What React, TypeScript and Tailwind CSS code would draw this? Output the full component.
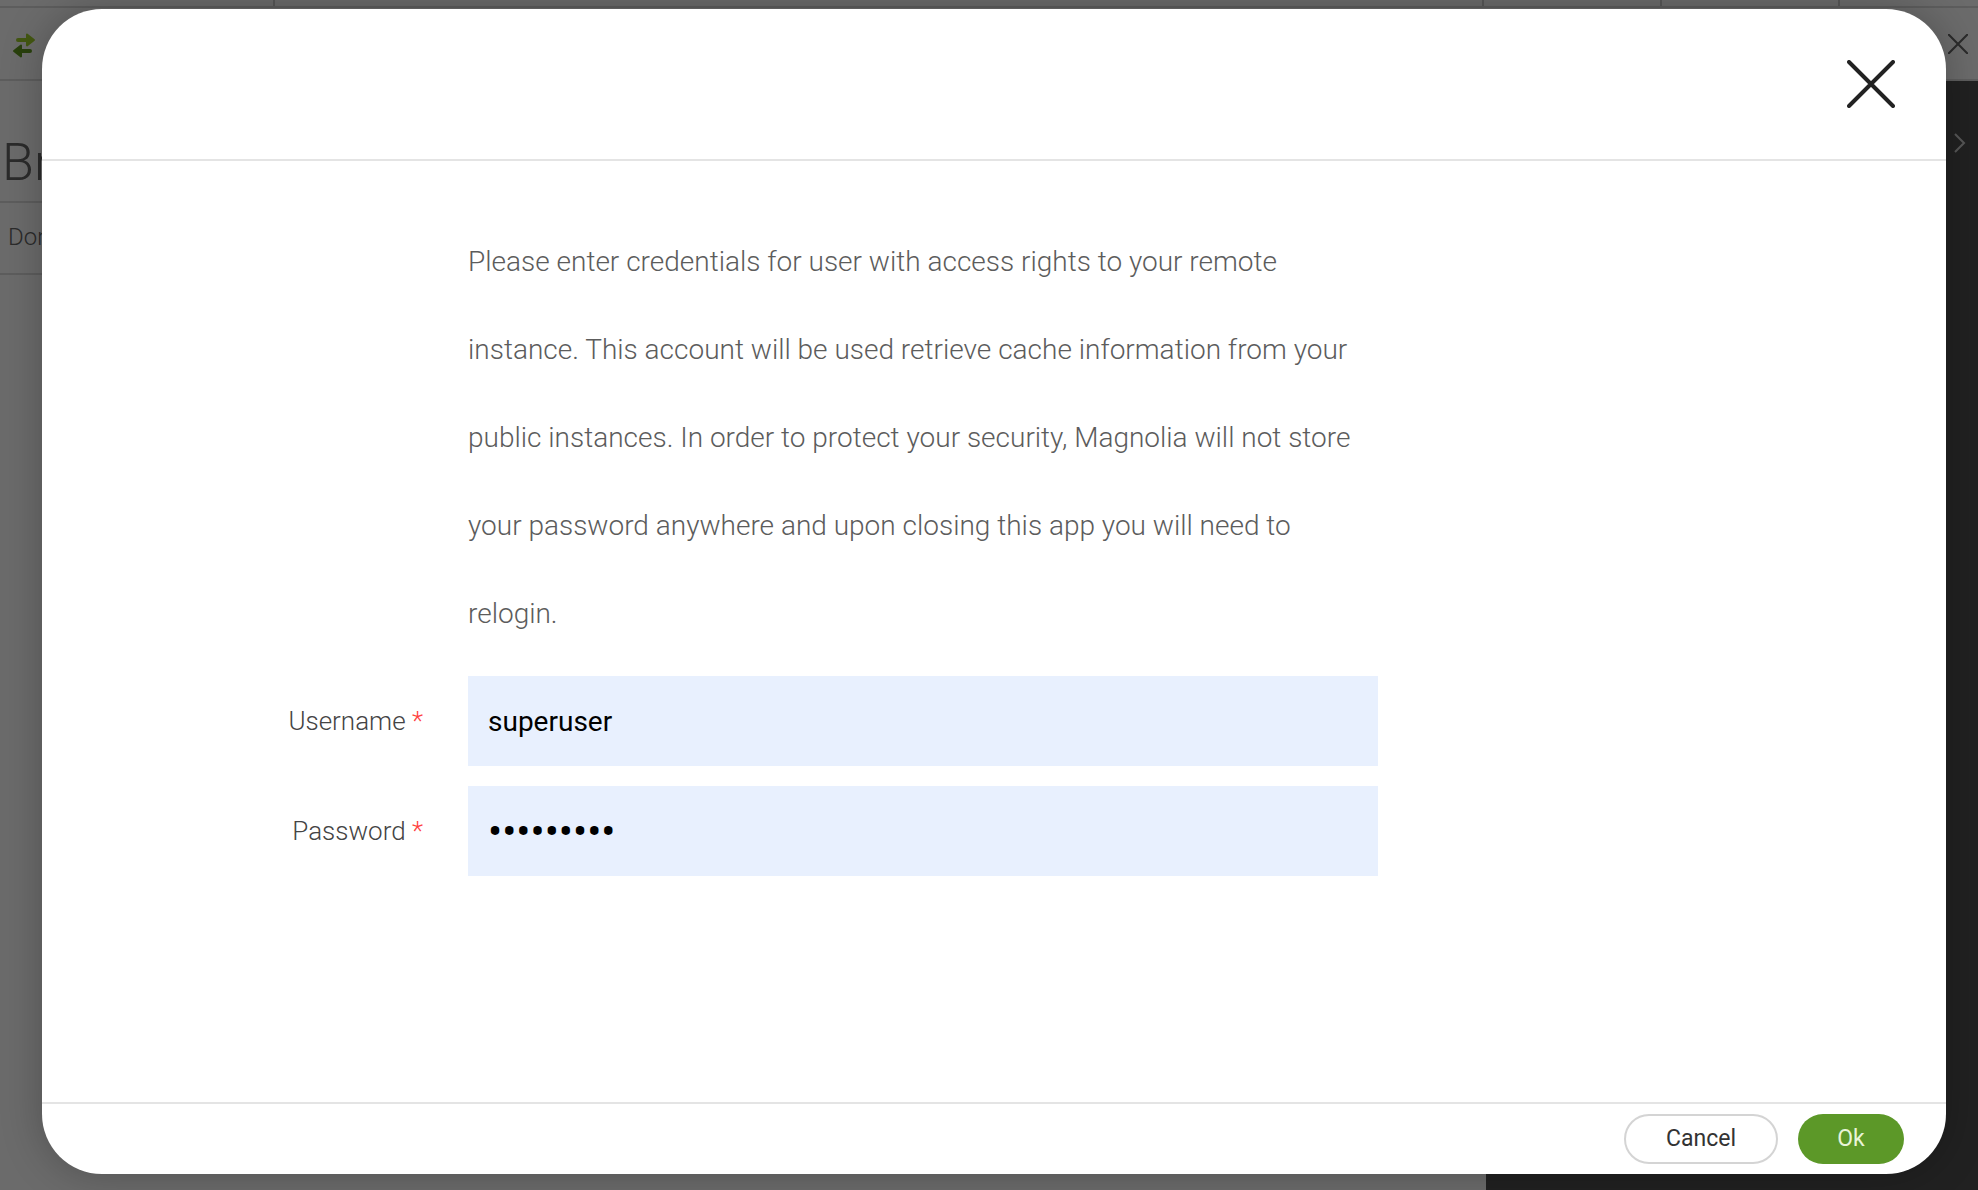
import React from "react";

const ArrowsIcon = () => (
  <svg className="mt-1 h-7 w-6 shrink-0" viewBox="0 0 24 28" fill="none">
    <path d="M6 8h9" stroke="#a0d02c" strokeWidth="4" strokeLinecap="round" />
    <path d="M15 2.500l7 5.500-7 5.500z" fill="#a0d02c" stroke="#a0d02c" strokeWidth="2" strokeLinejoin="round" />
    <path d="M9 19h9" stroke="#629a20" strokeWidth="4" strokeLinecap="round" />
    <path d="M9 13.500l-7 5.500 7 5.500z" fill="#629a20" stroke="#629a20" strokeWidth="2" strokeLinejoin="round" />
  </svg>
);

const CrossIcon = (props: any) => (
  <svg
    className={props.className}
    viewBox="0 0 48 48"
    fill="none"
    stroke="currentColor"
    strokeWidth={props.stroke}
    strokeLinecap="round"
  >
    <path d="M2 2l44 44M46 2L2 46" />
  </svg>
);

const Page = () => (
  <div className="flex h-full flex-col bg-white text-[#666]">
    <div className="flex h-2 shrink-0 border-b-2 border-[#dedede]">
      <div className="w-[275px] border-r-2 border-[#d0d0d0]" />
      <div className="grow border-r-2 border-[#d0d0d0]" />
      <div className="w-[178px] border-r-2 border-[#d0d0d0]" />
      <div className="w-[178px] border-r-2 border-[#d0d0d0]" />
      <div className="w-[138px]" />
    </div>
    <div className="flex h-[73px] shrink-0 items-center justify-between border-b-2 border-[#dedede] pr-2.5 pl-3">
      <ArrowsIcon />
      <CrossIcon className="h-5 w-5" stroke={5} />
    </div>
    <div className="flex grow">
      <div className="grow">
        <div className="flex h-[122px] items-end border-b-2 border-[#dedede] pb-1.5 pl-0.5 text-[52px] leading-[64px] font-light">
          Browser
        </div>
        <div className="flex h-[72px] items-center border-b-2 border-[#dedede] pb-0.5 pl-2 text-[24px] font-light">
          Domain
        </div>
      </div>
      <div className="flex w-[492px] justify-end bg-[#505050] pt-[52px] pr-3 text-[#d0d0d0]">
        <svg className="h-5 w-3" viewBox="0 0 12 20" fill="none" stroke="currentColor" strokeWidth="2">
          <path d="M1 1l9 9-9 9" />
        </svg>
      </div>
    </div>
  </div>
);

const Field = (props: any) => {
  const { id, label, type, value, size } = props;
  return (
    <div className="flex items-center">
      <label htmlFor={id} className="w-[426px] shrink-0 pr-[45px] text-right text-[26px] font-light text-[#444]">
        {label} <span className="text-[#ff4040]">*</span>
      </label>
      <input
        id={id}
        type={type}
        defaultValue={value}
        className={`h-[90px] w-[910px] bg-[#e8f0fe] px-5 text-black outline-none ${size}`}
      />
    </div>
  );
};

const LoginDialog = () => (
  <div
    role="dialog"
    aria-label="Login"
    className="flex grow flex-col overflow-hidden rounded-[60px] bg-white shadow-[0_0_40px_rgba(0,0,0,0.25)]"
  >
    <div className="flex h-[152px] shrink-0 items-center justify-end border-b-2 border-[#e4e4e4] pr-[51px]">
      <button type="button" aria-label="Close" className="text-[#222]">
        <CrossIcon className="h-12 w-12" stroke={4} />
      </button>
    </div>
    <form className="grow pt-[57px]">
      <p className="mb-4.5 ml-[426px] w-[910px] text-[28px] leading-[88px] font-light text-[#5c5c5c]">
        Please enter credentials for user with access rights to your remote instance. This account will be used
        retrieve cache information from your public instances. In order to protect your security, Magnolia will not
        store your password anywhere and upon closing this app you will need to relogin.
      </p>
      <div className="flex flex-col gap-5">
        <Field id="username" label="Username" type="text" value="superuser" size="text-[28px]" />
        <Field id="password" label="Password" type="password" value="superuser" size="text-[42px]" />
      </div>
    </form>
    <div className="flex h-[72px] shrink-0 items-center justify-end gap-5 border-t-2 border-[#e4e4e4] pr-[42px] text-[23px]">
      <button type="button" className="h-[50px] w-[154px] rounded-full border-2 border-[#d4d4d4] text-[#333]">
        Cancel
      </button>
      <button type="button" className="h-[50px] w-[106px] rounded-full bg-[#5c9828] text-[#e8f4d8]">
        Ok
      </button>
    </div>
  </div>
);

export default function App() {
  return (
    <div className="relative h-screen overflow-hidden font-[Roboto,sans-serif]">
      <Page />
      <div className="absolute inset-0 flex bg-black/58 pt-[9px] pr-8 pb-4 pl-[42px]">
        <LoginDialog />
      </div>
    </div>
  );
}
